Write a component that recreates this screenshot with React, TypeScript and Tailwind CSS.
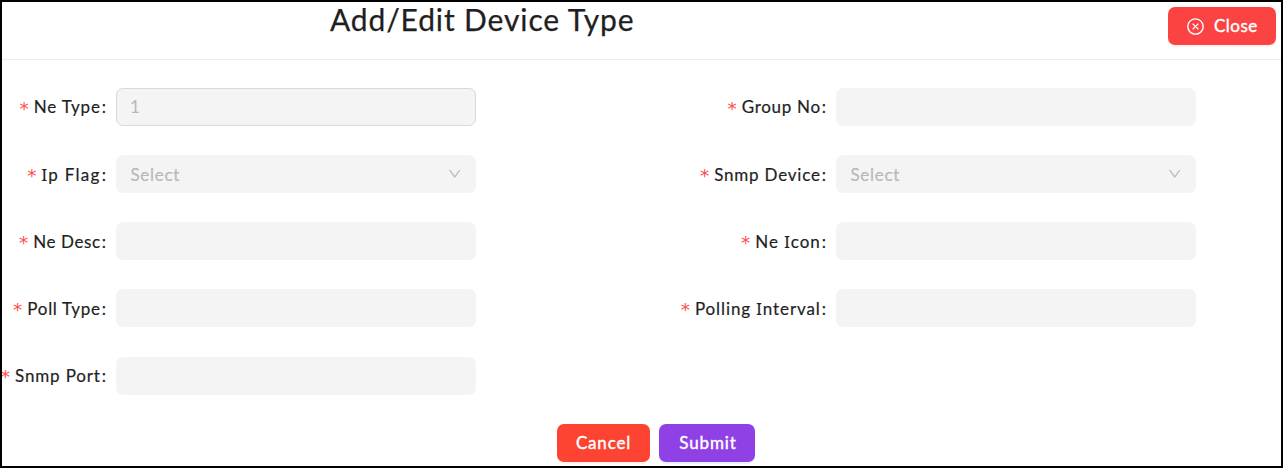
import { AiOutlineCloseCircle, AiOutlineDown } from "react-icons/ai";

type Kind = "value" | "select" | "blank";
interface FieldProps {
  label: React.ReactNode;
  tracking: string;
  kind?: Kind;
  value?: string;
}

function SerifI() {
  return <span className="font-['Noto_Sans',sans-serif] text-[16.5px] leading-none">I</span>;
}

function Field({ label, tracking, kind = "blank", value }: FieldProps) {
  return (
    <div className="flex h-[38px] items-center">
      <div className="flex w-[114px] shrink-0 items-center justify-end whitespace-nowrap pr-[10px] pt-[0.6px] text-[17px] leading-[38px] text-[#1f1f1f] [-webkit-text-stroke:0.2px_#1f1f1f]">
        <span className="mr-[5px] mt-[3px] font-['DejaVu_Sans',sans-serif] text-[18.5px] text-[#ff4d4f] [-webkit-text-stroke:0px]">*</span>
        <span className={tracking}>{label}</span>
        <span className="ml-[1px]">:</span>
      </div>
      <div
        className={
          kind === "value"
            ? "flex h-[38px] w-[360px] shrink-0 items-center justify-between rounded-[7px] border border-[#d9d9d9] bg-[#f4f4f4] px-[13px] text-[17px] text-[#b8b8b8]"
            : "flex h-[38px] w-[360px] shrink-0 items-center justify-between rounded-[7px] bg-[#f4f4f4] px-[13px] text-[17px] text-[#b8b8b8]"
        }
      >
        {kind === "value" && <span>{value}</span>}
        {kind === "select" && (
          <>
            <span className="ml-[1.5px] mt-[1px] tracking-[0.7px] [-webkit-text-stroke:0.2px_#b8b8b8]">Select</span>
            <AiOutlineDown className="mb-[1px] mr-px size-[15.5px]" />
          </>
        )}
      </div>
    </div>
  );
}

export default function App() {
  return (
    <div className="flex h-[468px] w-[1283px] flex-col overflow-hidden border-2 border-black bg-white font-[Lato,sans-serif]">
      <header className="flex h-[58px] shrink-0 items-start justify-between border-b border-[#ececec] pl-[328px] pr-[5px]">
        <h1 className="-mt-px whitespace-nowrap text-[30px] leading-[36px] tracking-[0.87px] text-[#1f1f1f] [-webkit-text-stroke:0.25px_#1f1f1f]">Add/Edit Device Type</h1>
        <button className="mt-[5px] flex h-[38px] w-[108px] items-center rounded-[7px] bg-[#fc4343] pl-[18px] text-[17px] text-white shadow-[0_2px_0_rgba(255,38,5,0.06)]">
          <AiOutlineCloseCircle className="mr-[9px] size-[19px]" />
          <span className="tracking-[0.5px] [-webkit-text-stroke:0.4px_white]">Close</span>
        </button>
      </header>
      <main className="grid grid-cols-[720px_474px] gap-y-[29.12px] pt-[28.1px]">
        <Field label="Ne Type" tracking="tracking-[0.8px]" kind="value" value="1" />
        <Field label="Group No" tracking="tracking-[0.7px]" />
        <Field label={<><SerifI />p Flag</>} tracking="tracking-[1.3px]" kind="select" />
        <Field label="Snmp Device" tracking="tracking-[0.8px]" kind="select" />
        <Field label="Ne Desc" tracking="tracking-[0.6px]" />
        <Field label={<>Ne <SerifI />con</>} tracking="tracking-[0.95px]" />
        <Field label="Poll Type" tracking="tracking-[0.7px]" />
        <Field label={<>Polling <SerifI />nterval</>} tracking="tracking-[0.9px]" />
        <Field label="Snmp Port" tracking="tracking-[0.85px]" />
      </main>
      <footer className="mt-[29px] flex gap-[9px] pl-[555px] text-[17px] text-white [-webkit-text-stroke:0.4px_white]">
        <button className="h-[38px] w-[93px] rounded-[7px] bg-[#fd4432] tracking-[0.8px] shadow-[0_2px_0_rgba(255,38,5,0.06)]">Cancel</button>
        <button className="h-[38px] w-[96px] rounded-[7px] bg-[#8f41e6] pl-[2px] tracking-[0.9px] shadow-[0_2px_0_rgba(5,145,255,0.1)]">Submit</button>
      </footer>
    </div>
  );
}
